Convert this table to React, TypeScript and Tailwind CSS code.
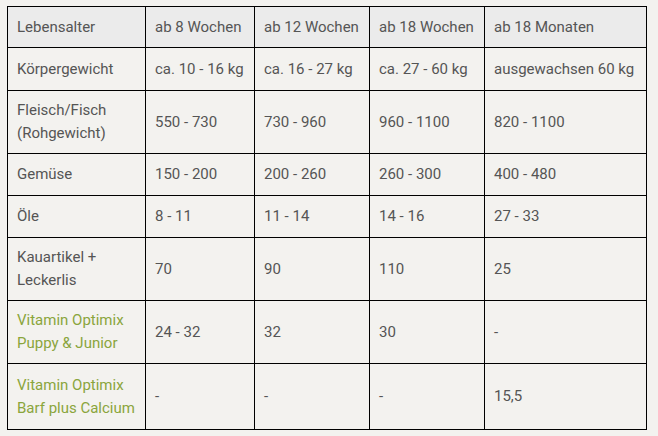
const rows: { label: string[]; green?: boolean; cells: string[]; h: string }[] = [
  { label: ["Körpergewicht"], cells: ["ca. 10 - 16 kg", "ca. 16 - 27 kg", "ca. 27 - 60 kg", "ausgewachsen 60 kg"], h: "h-[43px]" },
  { label: ["Fleisch/Fisch", "(Rohgewicht)"], cells: ["550 - 730", "730 - 960", "960 - 1100", "820 - 1100"], h: "h-[63px]" },
  { label: ["Gemüse"], cells: ["150 - 200", "200 - 260", "260 - 300", "400 - 480"], h: "h-[42px]" },
  { label: ["Öle"], cells: ["8 - 11", "11 - 14", "14 - 16", "27 - 33"], h: "h-[42px]" },
  { label: ["Kauartikel +", "Leckerlis"], cells: ["70", "90", "110", "25"], h: "h-[63px]" },
  { label: ["Vitamin Optimix", "Puppy & Junior"], green: true, cells: ["24 - 32", "32", "30", "-"], h: "h-[63px]" },
  { label: ["Vitamin Optimix", "Barf plus Calcium"], green: true, cells: ["-", "-", "-", "15,5"], h: "h-[66px]" },
];

const head = ["Lebensalter", "ab 8 Wochen", "ab 12 Wochen", "ab 18 Wochen", "ab 18 Monaten"];

export default function App() {
  return (
    <div
      className="w-[658px] h-[436px] bg-[#f3f2ef] pt-[6px] pl-[7px]"
      style={{ fontFamily: "Roboto, 'Liberation Sans', sans-serif" }}
    >
      <table className="table-fixed border-collapse w-[639px] text-[15px] leading-[23px] text-[#555555]">
        <colgroup>
          <col className="w-[138px]" />
          <col className="w-[109px]" />
          <col className="w-[115px]" />
          <col className="w-[115px]" />
          <col className="w-[162px]" />
        </colgroup>
        <thead>
          <tr className="h-[41px] bg-[#ebebeb]">
            {head.map((t) => (
              <th key={t} className="border border-[#000000] px-[9px] text-left font-normal align-middle">
                {t}
              </th>
            ))}
          </tr>
        </thead>
        <tbody>
          {rows.map((r) => (
            <tr key={r.label.join()} className={r.h}>
              <td className={`border border-[#000000] px-[9px] align-middle ${r.green ? "text-[#8aa53c]" : ""}`}>
                {r.label.map((l) => (
                  <div key={l}>{l}</div>
                ))}
              </td>
              {r.cells.map((c, i) => (
                <td key={i} className="border border-[#000000] px-[9px] align-middle">
                  {c}
                </td>
              ))}
            </tr>
          ))}
        </tbody>
      </table>
    </div>
  );
}
